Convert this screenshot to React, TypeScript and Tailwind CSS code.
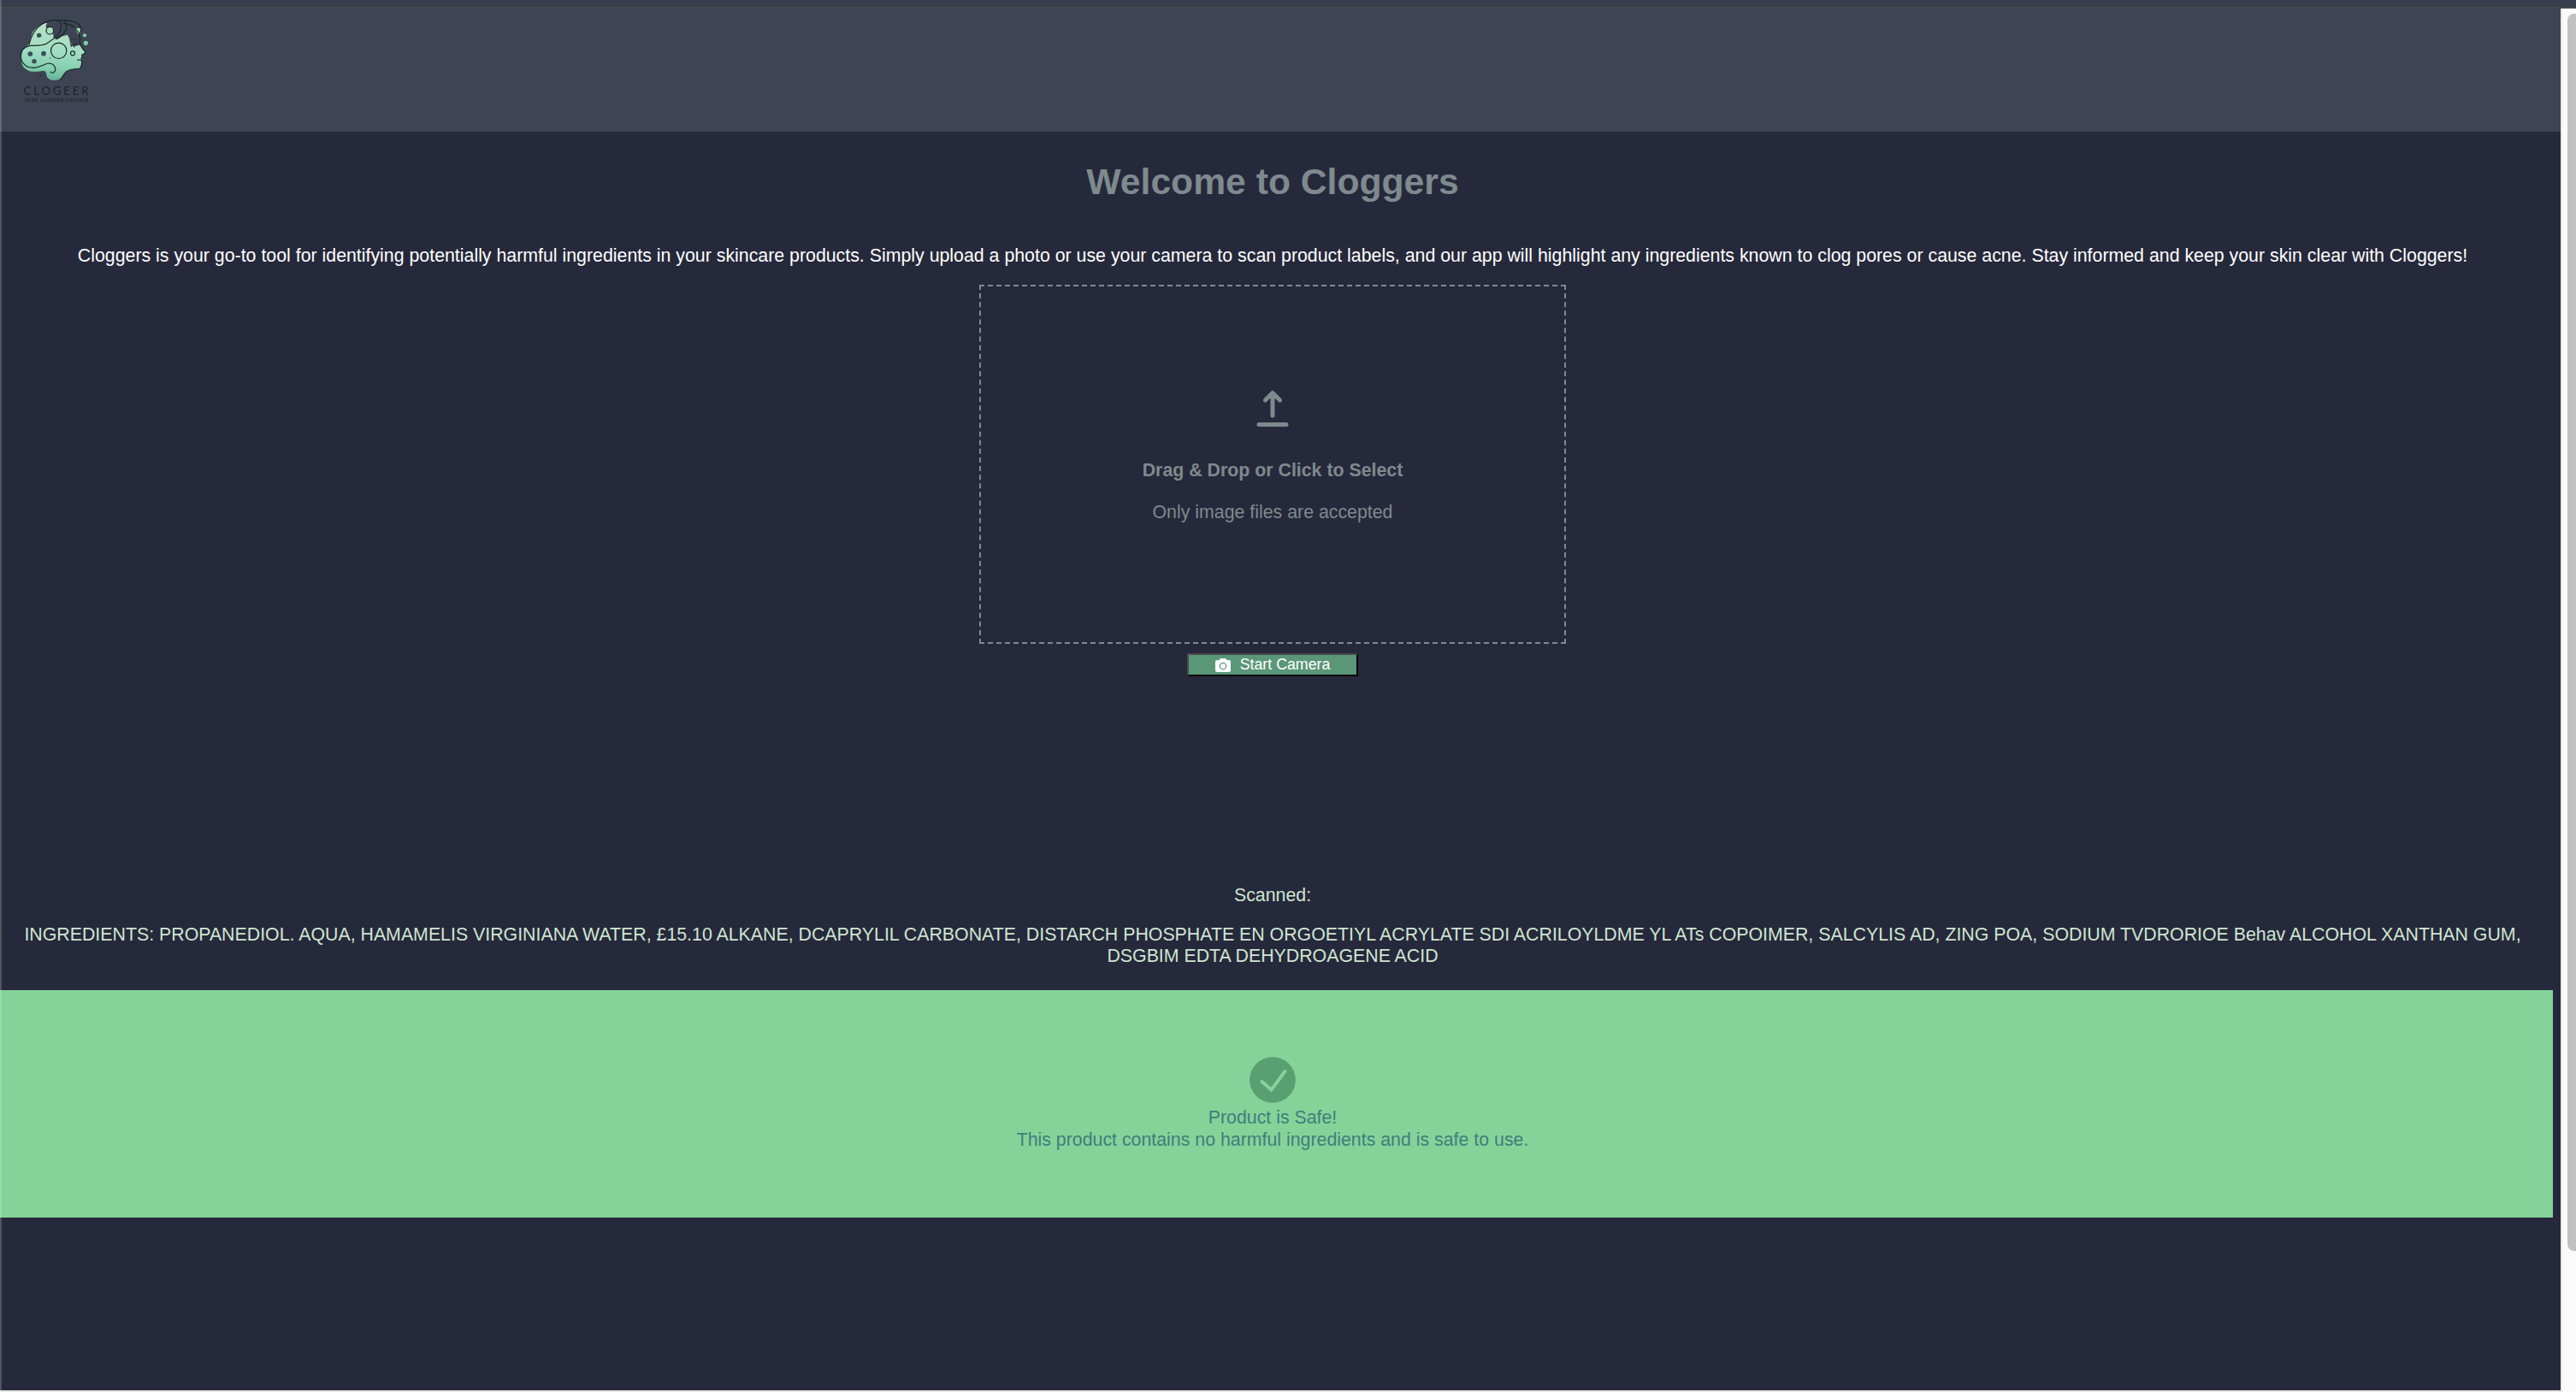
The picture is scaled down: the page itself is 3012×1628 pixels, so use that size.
import React from "react";

function Logo() {
  return (
    <svg width="84" height="104" viewBox="0 0 84 104" className="block" fill="none">
      <defs>
        <linearGradient id="skin" x1="0.3" y1="0" x2="0.2" y2="1">
          <stop offset="0" stopColor="#b9e2c4" />
          <stop offset="0.5" stopColor="#9fdcc2" />
          <stop offset="0.75" stopColor="#84cfb0" />
          <stop offset="1" stopColor="#5fae93" />
        </linearGradient>
      </defs>
      <g transform="translate(-23 -22) scale(0.33333)">
        <path
          d="M98 160 C108 145 106 128 116 112 C128 94 142 84 165 80 L160 94 L168 104 L186 118 L188 132 L202 138 L216 128 L236 122 L243 134 L246 150 L262 162 L280 158 L298 182 L287 195 L286 215 L282 241 L252 243 C232 248 222 262 214 274 C204 284 178 286 168 274 C160 264 166 252 154 248 C138 250 112 256 96 246 C76 234 76 222 74 200 C74 180 82 166 98 160Z"
          fill="url(#skin)"
        />
        <path d="M264 98 L282 100 L284 116 L274 122Z" fill="#a5e2bd" />
        <circle cx="175" cy="107" r="14" fill="#a9dcc0" />
        <g stroke="#17282a" strokeWidth="3.6" strokeLinecap="round" strokeLinejoin="round">
          <path d="M102 156 C112 112 142 72 192 70 C208 69 216 80 214 96 C212 120 190 136 162 154 C146 162 126 160 106 160 C84 164 73 178 73 197 C74 222 92 238 118 238 C144 237 156 222 174 222 C192 224 200 244 190 253 C186 257 180 256 177 252" />
          <path d="M196 71 C222 70 254 70 272 82 C286 92 288 110 276 122" />
          <path d="M222 82 C256 84 276 104 280 130 C278 154 284 166 298 180 C302 186 296 192 287 192 L289 201 L284 206 M271 210 L286 211 C288 222 286 234 280 240 C262 244 244 240 232 252 C222 262 220 272 212 279" />
          <path d="M228 76 C240 96 232 118 196 137" />
          <path d="M247 154 C254 162 262 160 270 152 M252 160 L249 163 M260 161 L260 165" />
          <path d="M246 140 Q256 132 268 140" strokeWidth="2" />
          <circle cx="206" cy="178" r="27.500" />
          <circle cx="175" cy="107" r="13" />
          <circle cx="255" cy="187" r="7.500" />
        </g>
        <g fill="#3a4d57">
          <circle cx="137" cy="124" r="8" />
          <circle cx="106" cy="189" r="8.500" />
          <circle cx="153" cy="188" r="8.500" />
          <circle cx="120" cy="215" r="8" />
          <circle cx="176" cy="204" r="2.500" />
        </g>
        <circle cx="141" cy="264" r="3" fill="#17282a" />
        <circle cx="297" cy="124" r="6.500" fill="#82cda4" />
        <circle cx="301" cy="151" r="8" fill="#82cda4" />
      </g>
      <text x="4.500" y="89" fontFamily="Lato, sans-serif" fontSize="13" textLength="76" lengthAdjust="spacing" fill="#182426">CLOGEER</text>
      <text x="6" y="97" fontFamily="Lato, sans-serif" fontWeight="700" fontSize="4.800" textLength="74" lengthAdjust="spacing" fill="#182426">ACNE CLOGGER CHECKER</text>
    </svg>
  );
}

function DropZone() {
  return (
    <section className="flex h-[420px] w-[686px] flex-col items-center border-2 border-dashed border-[#7e8a8d] pt-[121px] text-[#7e8a8d]">
      <svg width="38" height="44" viewBox="0 0 38 44" fill="none" stroke="currentColor" strokeWidth="5" strokeLinecap="round" strokeLinejoin="round" className="block">
        <path d="M19 30V4M10.500 12L19 3.500l8.500 8.500M3 40.500h32" />
      </svg>
      <p className="mt-[38px] font-bold">Drag &amp; Drop or Click to Select</p>
      <p className="mt-[24px]">Only image files are accepted</p>
    </section>
  );
}

export default function App() {
  return (
    <div className="relative flex h-[1628px] w-[3012px] flex-col overflow-hidden bg-[#fafafa] font-['Liberation_Sans',Arial,sans-serif] text-[21.333px] leading-[25px]">
      <div className="h-[10px] shrink-0 border-b-2 border-[#46484d] bg-[#373d4d]" />
      <div className="flex min-h-0 grow">
        <div className="flex w-[2996px] flex-col border-r-2 border-b-2 border-[#e8e6e4] bg-[#26293b]">
          <header className="h-[144px] shrink-0 bg-[#3e4453] pt-[12px] pl-[23px]">
            <Logo />
          </header>
          <main className="flex w-[2976px] flex-col items-center">
            <h1 className="mt-[34px] text-[42.667px] leading-[49px] font-bold text-[#7e8a8d]">Welcome to Cloggers</h1>
            <p className="mt-[50px] mb-[21px] whitespace-nowrap text-white">
              Cloggers is your go-to tool for identifying potentially harmful ingredients in your skincare products. Simply upload a photo or use your camera to scan product labels, and our app will highlight any ingredients known to clog pores or cause acne. Stay informed and keep your skin clear with Cloggers!
            </p>
            <DropZone />
            <button className="mt-[11px] flex h-[27px] w-[200px] items-center justify-center border-2 border-t-[#4c4c4c] border-r-black border-b-black border-l-[#4c4c4c] bg-[#5a9678] pb-px text-[17.778px] leading-[20px] text-white">
              <svg width="18" height="16" viewBox="0 0 18 16" className="mt-[2px] mr-[11px] block">
                <path d="M6 0h6l1.500 2H16a2 2 0 0 1 2 2v10a2 2 0 0 1-2 2H2a2 2 0 0 1-2-2V4a2 2 0 0 1 2-2h2.500z" fill="white" />
                <circle cx="9" cy="9" r="3.700" fill="none" stroke="#5a9678" strokeWidth="1.200" />
              </svg>
              Start Camera
            </button>
            <p className="mt-[244px] text-[#cfe5d2]">Scanned:</p>
            <div className="mt-[21px] text-center text-[#cfe5d2]">
              <p>INGREDIENTS: PROPANEDIOL. AQUA, HAMAMELIS VIRGINIANA WATER, £15.10 ALKANE, DCAPRYLIL CARBONATE, DISTARCH PHOSPHATE EN ORGOETIYL ACRYLATE SDI ACRILOYLDME YL ATs COPOIMER, SALCYLIS AD, ZING POA, SODIUM TVDRORIOE Behav ALCOHOL XANTHAN GUM,</p>
              <p>DSGBIM EDTA DEHYDROAGENE ACID</p>
            </div>
          </main>
          <section className="mt-[27px] h-[266px] w-[2985px] bg-[#85d399] pt-[78px]">
            <div className="flex w-[2976px] flex-col items-center text-[#427d7c]">
              <svg width="54" height="54" viewBox="0 0 54 54" className="mb-[5px] block">
                <circle cx="27" cy="27" r="26.800" fill="#5a9f72" />
                <path d="M14.500 29L25.500 38.500L41.500 17" fill="none" stroke="#85d399" strokeWidth="4" strokeLinecap="round" />
              </svg>
              <p>Product is Safe!</p>
              <p className="mt-px">This product contains no harmful ingredients and is safe to use.</p>
            </div>
          </section>
        </div>
        <div className="flex grow justify-end bg-[#fafafa] pt-[6px]">
          <div className="h-[1447px] w-[10px] rounded-l-[8px] bg-[#c1c1c1]" />
        </div>
      </div>
      <div className="absolute top-0 left-0 h-full w-[2px] bg-white/20" />
    </div>
  );
}
